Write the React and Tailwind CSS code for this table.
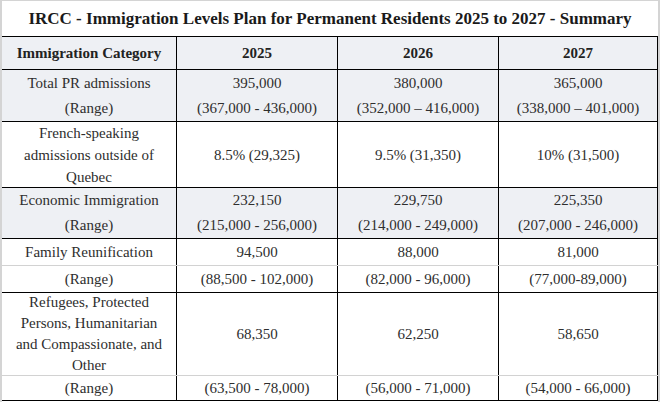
import React from 'react'

const rows = [
  { h: 'h-[52px]', bg: 'bg-[#eef0f4]', line: 'border-black', leading: 'leading-[25px]',
    cells: [['Total PR admissions', '(Range)'], ['395,000', '(367,000 - 436,000)'], ['380,000', '(352,000 – 416,000)'], ['365,000', '(338,000 – 401,000)']] },
  { h: 'h-[66px]', bg: 'bg-white', line: 'border-black', leading: 'leading-[22px]',
    cells: [['French-speaking', 'admissions outside of', 'Quebec'], ['8.5% (29,325)'], ['9.5% (31,350)'], ['10% (31,500)']] },
  { h: 'h-[51px]', bg: 'bg-[#eef0f4]', line: 'border-black', leading: 'leading-[25px]',
    cells: [['Economic Immigration', '(Range)'], ['232,150', '(215,000 - 256,000)'], ['229,750', '(214,000 - 249,000)'], ['225,350', '(207,000 - 246,000)']] },
  { h: 'h-[27px]', bg: 'bg-white', line: 'border-[#d2d2d2]', leading: 'leading-[22px]',
    cells: [['Family Reunification'], ['94,500'], ['88,000'], ['81,000']] },
  { h: 'h-[27px]', bg: 'bg-white', line: 'border-black', leading: 'leading-[22px]',
    cells: [['(Range)'], ['(88,500 - 102,000)'], ['(82,000 - 96,000)'], ['(77,000-89,000)']] },
  { h: 'h-[83px]', bg: 'bg-white', line: 'border-[#d2d2d2]', leading: 'leading-[21px]',
    cells: [['Refugees, Protected', 'Persons, Humanitarian', 'and Compassionate, and', 'Other'], ['68,350'], ['62,250'], ['58,650']] },
  { h: 'h-[25px]', bg: 'bg-white', line: 'border-black', leading: 'leading-[22px]',
    cells: [['(Range)'], ['(63,500 - 78,000)'], ['(56,000 - 71,000)'], ['(54,000 - 66,000)']] },
]

const widths = ['w-[175px]', 'w-[161px]', 'w-[161px]', 'w-[159px]']

export default function App() {
  return (
    <div className="w-[660px] h-[402px] bg-white border-t border-l-2 border-r-2 border-[#d4d4d4] text-[#2e2e2e] font-['Liberation_Serif',serif] text-[15px]">
      {/* Title */}
      <div className="h-[36px] border-b border-black flex items-center justify-center font-bold text-[17px] text-[#1a1a1a]">
        IRCC - Immigration Levels Plan for Permanent Residents 2025 to 2027 - Summary
      </div>

      {/* Header */}
      <div className="h-[33px] flex border-b border-black bg-[#eef0f4] font-bold text-[#222]">
        {['Immigration Category', '2025', '2026', '2027'].map((t, i) => (
          <div key={t} className={`${widths[i]} border-r border-black flex items-center justify-center`}>
            {t}
          </div>
        ))}
      </div>

      {/* Body */}
      {rows.map((r, ri) => (
        <div key={ri} className={`${r.h} ${r.bg} ${r.line} border-b flex`}>
          {r.cells.map((lines, ci) => (
            <div key={ci} className={`${widths[ci]} border-r border-black flex flex-col items-center justify-center text-center ${r.leading}`}>
              {lines.map((l) => (
                <div key={l} className="whitespace-nowrap">{l}</div>
              ))}
            </div>
          ))}
        </div>
      ))}
    </div>
  )
}
